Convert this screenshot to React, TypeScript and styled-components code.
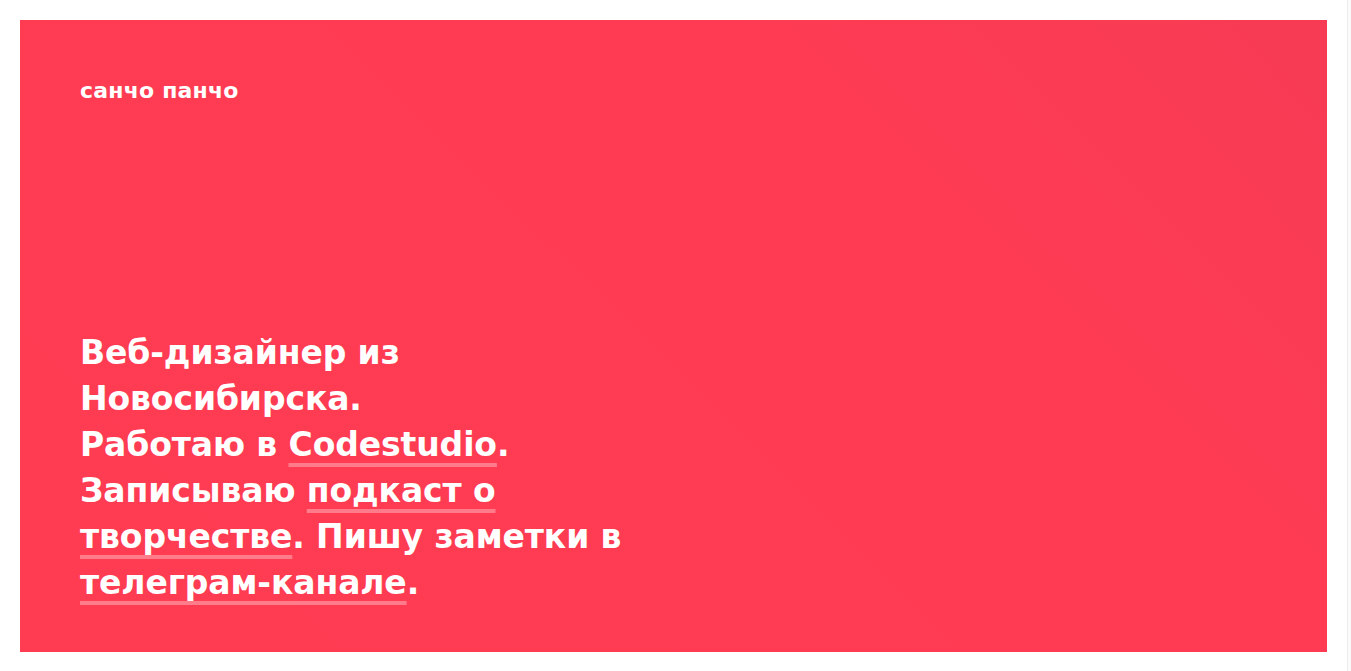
import styled, { createGlobalStyle } from 'styled-components';

const GlobalStyle = createGlobalStyle`
  html, body {
    margin: 0;
    padding: 0;
    background: #ffffff;
  }
  body {
    font-family: "DejaVu Sans", "Noto Sans", "Liberation Sans", sans-serif;
    -webkit-font-smoothing: antialiased;
  }
`;

const links = {
  codestudio: 'Codestudio',
  podcast: 'подкаст о творчестве',
  telegram: 'телеграм-канале'
};

const App = () => {
  return (
    <>
      <GlobalStyle />
      <Page>
        <Main>
          <Hero>
            <Logo>санчо панчо</Logo>
            <About>
              Веб-дизайнер из Новосибирска.
              <br />
              Работаю в <Link href="#">{links.codestudio}</Link>. Записываю{' '}
              <Link href="#">{links.podcast}</Link>. Пишу заметки в{' '}
              <Link href="#">{links.telegram}</Link>.
            </About>
          </Hero>
        </Main>
        <ScrollTrack />
      </Page>
    </>
  );
};

const Page = styled.div`
  display: flex;
  width: 100%;
  height: 671px;
`;

const Main = styled.main`
  flex: 1;
  padding: 20px 20px 19px 20px;
  box-sizing: border-box;
`;

const ScrollTrack = styled.div`
  width: 3px;
  border-left: 1px solid #ececec;
  background: #fbfbfb;
`;

const Hero = styled.section`
  height: 100%;
  box-sizing: border-box;
  padding: 56px 60px 46px;
  display: flex;
  flex-direction: column;
  justify-content: space-between;
  background: linear-gradient(225deg, #f73b54 0%, #ff3b53 35%, #ff3c52 100%);
  color: #ffffff;
`;

const Logo = styled.div`
  font-size: 22px;
  font-weight: 700;
  line-height: 30px;
  letter-spacing: 0.2px;
`;

const About = styled.p`
  margin: 0;
  max-width: 570px;
  font-size: 33px;
  font-weight: 700;
  line-height: 46px;
  letter-spacing: -0.1px;
`;

const Link = styled.a`
  color: #ffffff;
  text-decoration: underline;
  text-decoration-color: rgba(255, 255, 255, 0.33);
  text-decoration-thickness: 4px;
  text-underline-offset: 7px;
  text-decoration-skip-ink: none;
`;

export default App;
